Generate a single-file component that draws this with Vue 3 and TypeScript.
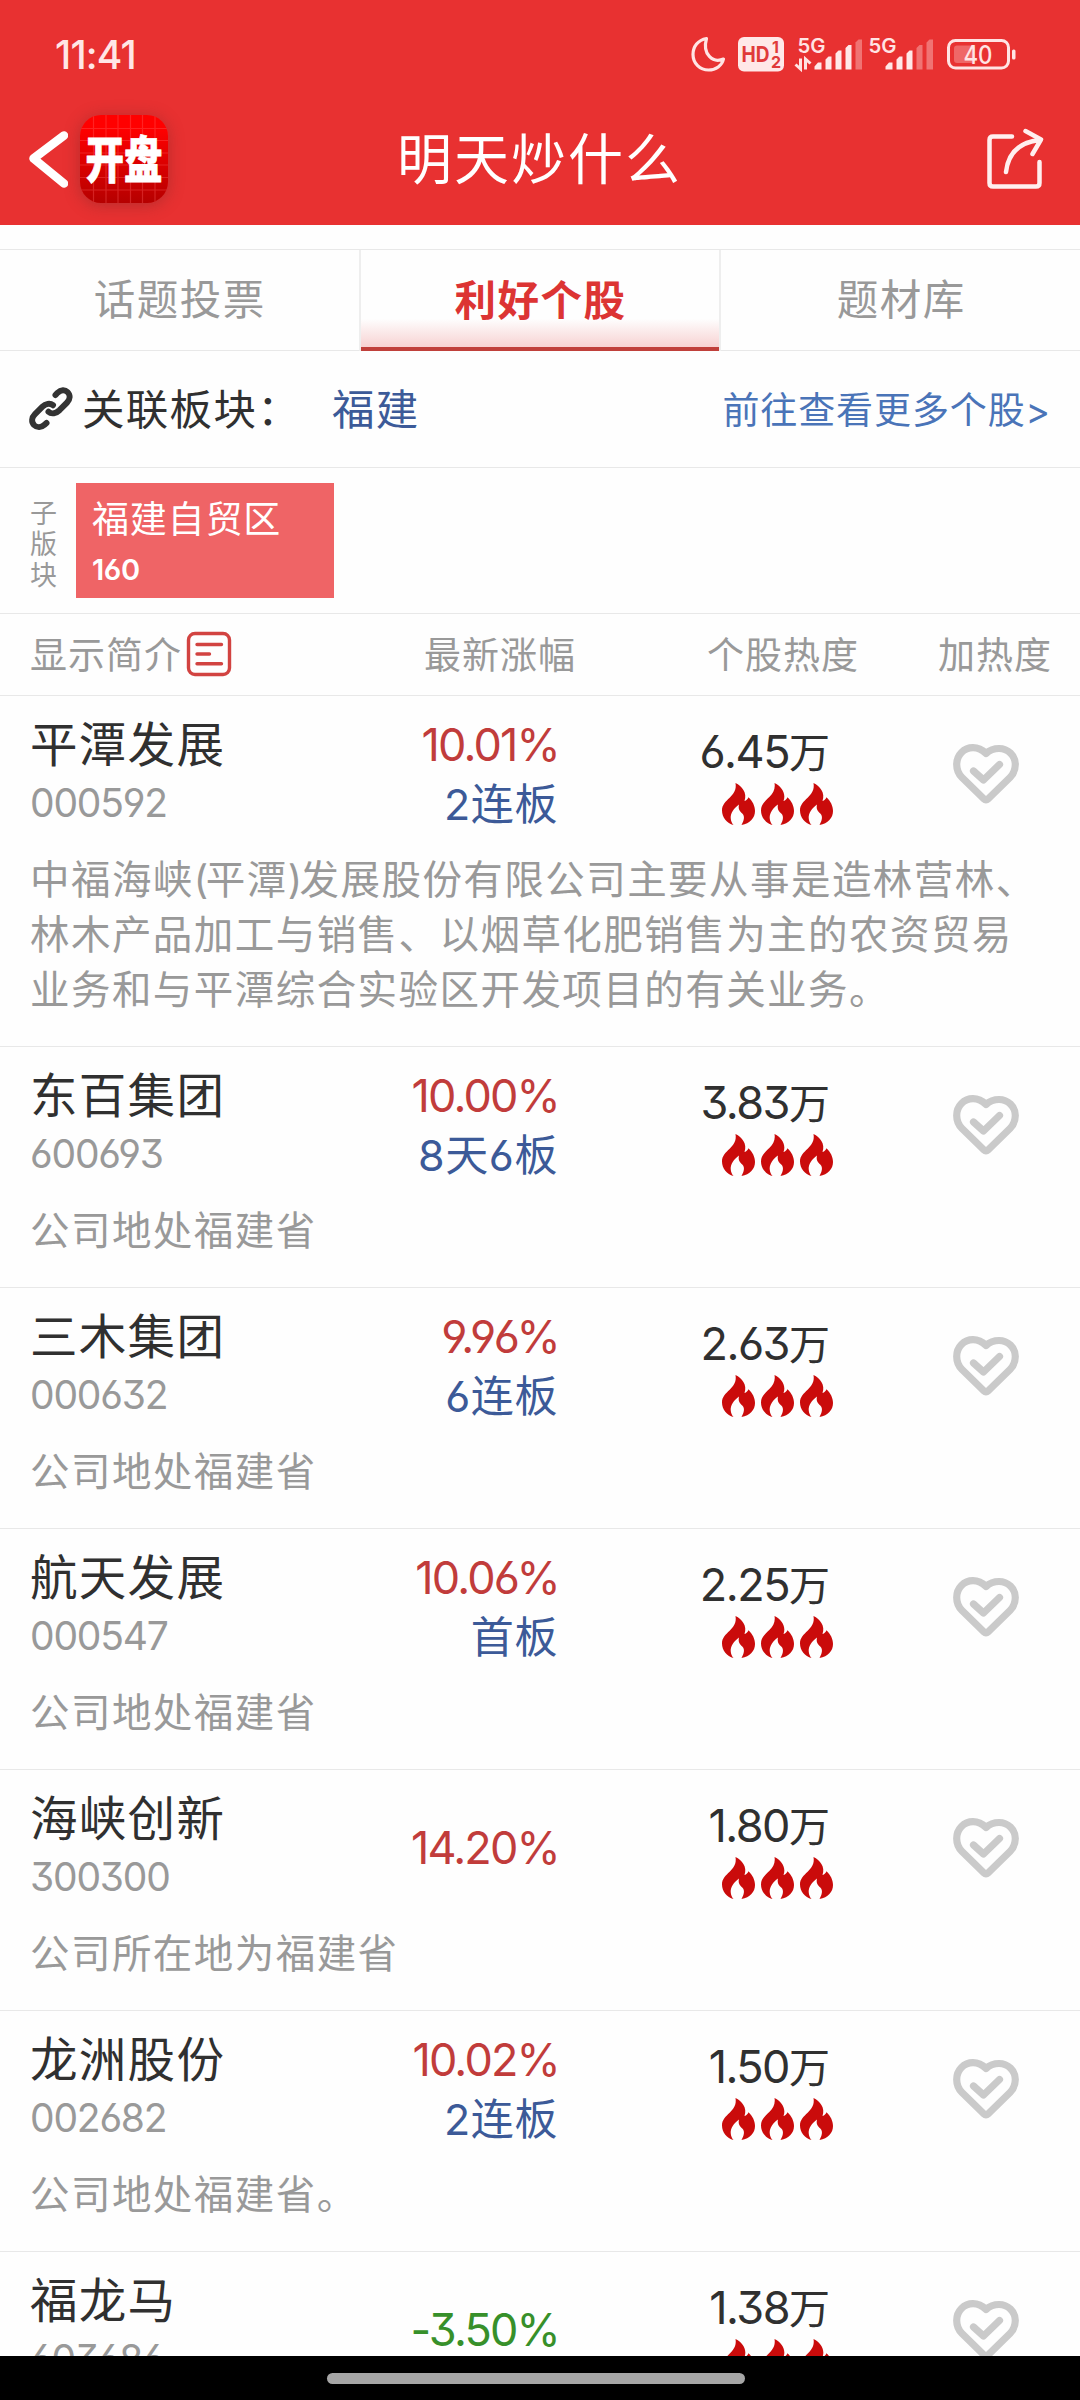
<script setup lang="ts">
interface Stock {
  name: string
  code: string
  change: string
  tag?: string
  heat: string
  intro: string[]
}

const tabs: string[] = ['话题投票', '利好个股', '题材库']
const activeTab = 1

const stocks: Stock[] = [
  {
    name: '平潭发展', code: '000592', change: '10.01%', tag: '2连板', heat: '6.45',
    intro: [
      '中福海峡(平潭)发展股份有限公司主要从事是造林营林、',
      '林木产品加工与销售、以烟草化肥销售为主的农资贸易',
      '业务和与平潭综合实验区开发项目的有关业务。',
    ],
  },
  { name: '东百集团', code: '600693', change: '10.00%', tag: '8天6板', heat: '3.83', intro: ['公司地处福建省'] },
  { name: '三木集团', code: '000632', change: '9.96%', tag: '6连板', heat: '2.63', intro: ['公司地处福建省'] },
  { name: '航天发展', code: '000547', change: '10.06%', tag: '首板', heat: '2.25', intro: ['公司地处福建省'] },
  { name: '海峡创新', code: '300300', change: '14.20%', heat: '1.80', intro: ['公司所在地为福建省'] },
  { name: '龙洲股份', code: '002682', change: '10.02%', tag: '2连板', heat: '1.50', intro: ['公司地处福建省。'] },
  { name: '福龙马', code: '603686', change: '-3.50%', heat: '1.38', intro: ['公司地处福建省'] },
]

// Half-width brackets are set tighter than the Chinese text around them.
const pieces = (line: string): string[] => line.split(/([()])/)
const isBracket = (piece: string): boolean => piece === '(' || piece === ')'
</script>

<template>
  <div class="phone">
    <header class="top">
      <div class="status">
        <span class="clock">11:41</span>
        <svg class="status-icons" width="326" height="40" viewBox="690 34 326 40">
          <path d="M706.5 38.5C698 40 693 46.500 693 54.500C693 63.500 700 70 708.500 70C716 70 722 65.500 723.500 59C713 63.500 702 54.500 706.500 38.500Z" fill="none" stroke="#ffe4e4" stroke-width="3.200" stroke-linejoin="round" />
          <rect x="738" y="37" width="46" height="34.500" rx="6" fill="#ffe8e8" />
          <text x="741.500" y="61.500" class="hd" textLength="28" lengthAdjust="spacingAndGlyphs">HD</text>
          <text x="772" y="53" class="sim">1</text>
          <text x="771" y="67.500" class="sim">2</text>
          <text x="797.500" y="52.500" class="net" textLength="28" lengthAdjust="spacingAndGlyphs">5G</text>
          <path d="M800.500 58.500v10.500l-5-4.500M805.500 69.500v-10.500l5 4.500" fill="none" stroke="#ffe4e4" stroke-width="3" />
          <g fill="#ffe8e8">
            <path d="M814.500 69.500v-3l3.500-4h3.500v7zM825.500 69.500v-10l3-3h3v13zM835.500 69.500v-16l3-3h3v19zM845.500 69.500v-21.500l3-3h3v24.500z" />
            <path d="M855.500 69.500v-27l3-3h3.500v30z" opacity=".36" />
            <path d="M885.500 69.500v-3l3.500-4h3.500v7zM896.500 69.500v-10l3-3h3v13zM906.500 69.500v-16l3-3h3v19z" />
            <path d="M916.500 69.500v-21.500l3-3h3v24.500zM926.500 69.500v-27l3-3h3.500v30z" opacity=".36" />
          </g>
          <text x="868.500" y="52.500" class="net" textLength="28" lengthAdjust="spacingAndGlyphs">5G</text>
          <rect x="948.500" y="40.500" width="60" height="27.500" rx="7" fill="none" stroke="#ffe4e4" stroke-width="3" />
          <rect x="954" y="45.500" width="21" height="17.500" rx="3" fill="#ffe4e4" opacity=".3" />
          <rect x="1012" y="49.500" width="3.500" height="10" rx="1.500" fill="#ffe4e4" />
          <text x="963.500" y="63.500" class="bat" textLength="29" lengthAdjust="spacingAndGlyphs">40</text>
        </svg>
      </div>
      <div class="nav">
        <div class="nav-left">
          <svg width="40" height="60" viewBox="28 129 40 60">
            <path d="M64 135.500L33.500 158.500L64 183.500" fill="none" stroke="#fff" stroke-width="8.500" stroke-linecap="round" stroke-linejoin="round" />
          </svg>
          <div class="logo">
            <svg width="88" height="88" viewBox="0 0 88 88">
              <path d="M13.500 0V88M26 0V88M38 0V88M50.500 0V88M62.500 0V88M75 0V88M0 13.500H88M0 25.500H88M0 38H88M0 50H88M0 62.500H88M0 75H88" stroke="#ff6060" stroke-opacity=".35" stroke-width="1.200" />
              <text x="44" y="48" transform="translate(0 1) scale(1 1.290)" class="logo-text" text-anchor="middle">开盘</text>
            </svg>
          </div>
        </div>
        <h1>明天炒什么</h1>
        <svg class="share" width="58" height="62" viewBox="986 129 58 62">
          <path d="M1012 137.500H993Q989.500 137.500 989.500 141V184Q989.500 187.500 993 187.500H1036Q1039.500 187.500 1039.500 184V163M1006 173C1008 155 1019 143.500 1039 141M1025.500 132L1041 140.500L1032.500 155" fill="none" stroke="#ffefef" stroke-width="4.500" stroke-linecap="round" stroke-linejoin="round" />
        </svg>
      </div>
    </header>

    <nav class="tabs">
      <div v-for="(tab, i) in tabs" :key="tab" class="tab" :class="{ active: i === activeTab }">{{ tab }}</div>
    </nav>

    <section class="related">
      <svg width="46" height="46" viewBox="-1 -1 46 46">
        <path d="M26.500 8L28.500 5.800C32 2.300 36 2.500 38.500 5C41.500 8 41.300 12.300 38 15.700L30.500 23.200C27 26.500 22.500 27.500 19.500 24.800M24 18.200C21 15.800 16.500 16.700 13.500 19.700L6 27.200C2.500 30.700 2.300 35 5 38C8 41 12.500 40.500 15.500 37.800L17.500 36" fill="none" stroke="#333" stroke-width="6" stroke-linecap="round" />
      </svg>
      <span class="related-label">关联板块：</span>
      <span class="related-name">福建</span>
      <span class="more">前往查看更多个股&gt;</span>
    </section>

    <section class="sub">
      <div class="sub-label"><span>子</span><span>版</span><span>块</span></div>
      <div class="tile">
        <div class="tile-name">福建自贸区</div>
        <div class="tile-num">160</div>
      </div>
    </section>

    <section class="cols">
      <div class="c1">
        <span>显示简介</span>
        <svg width="46" height="46" viewBox="0 0 46 46">
          <rect x="2.500" y="2.500" width="41" height="41" rx="6.500" fill="none" stroke="#d24341" stroke-width="3.400" />
          <path d="M11 13.500H35.500M11 23H23.500M11 32.800H35.500" stroke="#d24341" stroke-width="3.400" stroke-linecap="round" />
        </svg>
      </div>
      <div class="c2">最新涨幅</div>
      <div class="c3">个股热度</div>
      <div class="c4">加热度</div>
    </section>

    <main class="list">
      <article v-for="s in stocks" :key="s.code" class="row">
        <div class="row-head">
          <div class="stock">
            <div class="name">{{ s.name }}</div>
            <div class="code">{{ s.code }}</div>
          </div>
          <div class="change">
            <div class="pct" :class="{ down: s.change.startsWith('-') }">{{ s.change }}</div>
            <div v-if="s.tag" class="tag">{{ s.tag }}</div>
          </div>
          <div class="heat">
            <div class="heat-val">{{ s.heat }}<span>万</span></div>
            <div class="flames">
              <svg v-for="n in 3" :key="n" width="33" height="42" viewBox="0 0 33 42">
                <path d="M13.500 0C20 3 25.500 10 22.500 18C24.500 17.500 25.800 16 26.500 14.300C30.500 18 33 23 33 28C33 35 28 40.500 19.500 42C22 37.500 23 33.500 20.500 30.800C17.500 28 16 26 17 21.500C12 25 8.500 30 8.700 35C8.900 38 10 40.500 11.500 42C5 40.500 0 34.500 0 27.500C0 16 16 14 13.500 0Z" fill="#ca0b0b" />
              </svg>
            </div>
          </div>
          <svg class="heart" width="66" height="60" viewBox="0 0 66 60">
            <path d="M33 9.500C29 5.500 25 3.700 20 3.700C11 3.700 3.700 11 3.700 20.500C3.700 25.500 5.500 30 9 33.500L31 55Q33 57 35 55L57 33.500C60.500 30 62.300 25.500 62.300 20.500C62.300 11.500 55 4.500 46 4.500C41 4.500 37 5.800 33 9.500ZM20.500 27L30.500 36L46.500 20.500" fill="none" stroke="#cacaca" stroke-width="7.200" stroke-linecap="round" stroke-linejoin="round" />
          </svg>
        </div>
        <div class="intro">
          <div v-for="line in s.intro" :key="line"><span v-for="(p, i) in pieces(line)" :key="i" :class="{ bracket: isBracket(p) }">{{ p }}</span></div>
        </div>
      </article>
    </main>

    <footer class="home"><div class="home-bar"></div></footer>
  </div>
</template>

<style>
body {
  margin: 0;
  background: #fff;
}
</style>

<style scoped>
.phone {
  width: 1080px;
  height: 2400px;
  display: flex;
  flex-direction: column;
  overflow: hidden;
  background: #fefefe;
  color: #303030;
  font-family: Inter, "Noto Sans CJK SC", sans-serif;
  font-feature-settings: "cv03", "cv04", "cv09";
  white-space: nowrap;
}
svg {
  display: block;
  flex: none;
}
.top {
  height: 225px;
  flex: none;
  background: #e83131;
  color: #fff;
}
.status {
  height: 108px;
  box-sizing: border-box;
  padding: 0 64px 0 55px;
  display: flex;
  align-items: center;
  justify-content: space-between;
}
.clock {
  font-size: 39px;
  font-weight: 500;
  letter-spacing: -.8px;
  color: #ffe6e6;
}
.hd { font: 700 22px Inter, sans-serif; fill: #e03a3a; }
.sim { font: 700 16px Inter, sans-serif; fill: #e03a3a; }
.net { font: 600 20px Inter, sans-serif; fill: #ffe4e4; }
.bat { font: 500 25px Inter, sans-serif; fill: #ffe4e4; }
.nav {
  height: 102px;
  padding: 0 36px 0 28px;
  display: flex;
  align-items: center;
}
.nav-left {
  width: 369px;
  display: flex;
  align-items: center;
  gap: 12px;
}
.logo {
  width: 88px;
  height: 88px;
  border-radius: 21px;
  overflow: hidden;
  background: linear-gradient(#ff0000 15%, #b50000);
  box-shadow: 0 2px 16px rgba(120, 40, 40, .45);
}
.logo-text {
  font: 900 38.500px "Noto Sans CJK SC", sans-serif;
  fill: #fff;
  stroke: #fff;
  stroke-width: .6px;
}
h1 {
  margin: 0;
  font-size: 55px;
  font-weight: 400;
  letter-spacing: 2px;
  line-height: 80px;
}
.share { margin-left: auto; }
.tabs {
  height: 100px;
  margin-top: 24px;
  flex: none;
  display: flex;
  border-top: 1px solid #e8e8e8;
  border-bottom: 1px solid #e8e8e8;
}
.tab {
  flex: 1;
  display: flex;
  align-items: center;
  justify-content: center;
  padding: 0 0 6px 1px;
  font-size: 41.500px;
  letter-spacing: 1.500px;
  color: #999;
}
.tab.active {
  margin-bottom: -1px;
  box-sizing: border-box;
  border-left: 2px solid #eee;
  border-right: 2px solid #eee;
  color: #dc3433;
  font-weight: 700;
  background: linear-gradient(#c0403b, #c0403b) bottom / 100% 4px no-repeat, linear-gradient(#fefefe 68%, #f7cfcf 98%);
}
.related {
  height: 116px;
  flex: none;
  display: flex;
  align-items: center;
  padding: 0 29px 0 28px;
  border-bottom: 1px solid #e8e8e8;
  font-size: 42.500px;
  letter-spacing: 1.300px;
}
.related-label,
.related-name { padding-bottom: 5px; }
.related-label { margin-left: 8px; width: 250px; }
.related-name { color: #3c5a98; }
.more {
  margin-left: auto;
  padding-bottom: 2px;
  font-size: 37px;
  letter-spacing: .9px;
  color: #4a74b8;
}
.sub {
  height: 145px;
  flex: none;
  display: flex;
  align-items: center;
  padding-left: 30px;
  border-bottom: 1px solid #e8e8e8;
}
.sub-label {
  width: 46px;
  padding-top: 10px;
  display: flex;
  flex-direction: column;
  font-size: 27px;
  line-height: 30.700px;
  color: #999;
}
.tile {
  width: 258px;
  height: 115px;
  box-sizing: border-box;
  padding: 13px 0 0 16px;
  background: #ef6466;
  color: #fff;
}
.tile-name {
  font-size: 37px;
  letter-spacing: .8px;
  line-height: 48px;
}
.tile-num {
  font-size: 29px;
  font-weight: 600;
  line-height: 52px;
  letter-spacing: -.4px;
}
.cols {
  height: 81px;
  flex: none;
  display: flex;
  align-items: center;
  border-bottom: 1px solid #e8e8e8;
  font-size: 37px;
  letter-spacing: 1px;
  color: #999;
}
.cols > div { padding-bottom: 3px; }
.c1 {
  width: 394px;
  padding-left: 30px;
  display: flex;
  align-items: center;
  gap: 4px;
}
.c1 svg { margin-top: 2px; }
.c2 { width: 283px; }
.c3 { width: 231px; }
.list {
  flex: 1;
  min-height: 0;
  overflow: hidden;
}
.row { border-bottom: 1px solid #e8e8e8; }
.row-head {
  height: 155px;
  display: flex;
  align-items: center;
  padding-left: 30px;
}
.stock { width: 300px; }
.name {
  font-size: 47.500px;
  letter-spacing: 1.300px;
  line-height: 58px;
}
.code {
  font-size: 39px;
  letter-spacing: -1.200px;
  line-height: 58px;
  color: #999;
}
.change {
  width: 229px;
  text-align: right;
}
.pct {
  font-size: 45px;
  letter-spacing: -1.800px;
  line-height: 58px;
  color: #c13c3b;
}
.pct.down { color: #37902a; }
.tag {
  margin: 1px 1px -1px 0;
  font-size: 43px;
  letter-spacing: .6px;
  line-height: 58px;
  color: #3c5a98;
}
.heat {
  width: 274px;
  padding-top: 4px;
  display: flex;
  flex-direction: column;
  align-items: flex-end;
}
.heat-val {
  padding-right: 3px;
  font-size: 45px;
  letter-spacing: -1.500px;
  line-height: 50px;
}
.heat-val span { font-size: 41px; letter-spacing: 0; }
.flames {
  display: flex;
  gap: 6px;
  margin-top: 5px;
}
.heart { margin-left: 120px; }
.intro {
  padding: 2px 0 28px 30px;
  font-size: 39.500px;
  letter-spacing: 1.450px;
  line-height: 55px;
  color: #999;
}
.bracket { letter-spacing: -2.500px; }
.home {
  height: 44px;
  flex: none;
  display: flex;
  align-items: center;
  justify-content: center;
  padding-right: 8px;
  background: #000;
}
.home-bar {
  width: 418px;
  height: 11px;
  margin-top: 1px;
  border-radius: 6px;
  background: #a6a6a6;
}
</style>
